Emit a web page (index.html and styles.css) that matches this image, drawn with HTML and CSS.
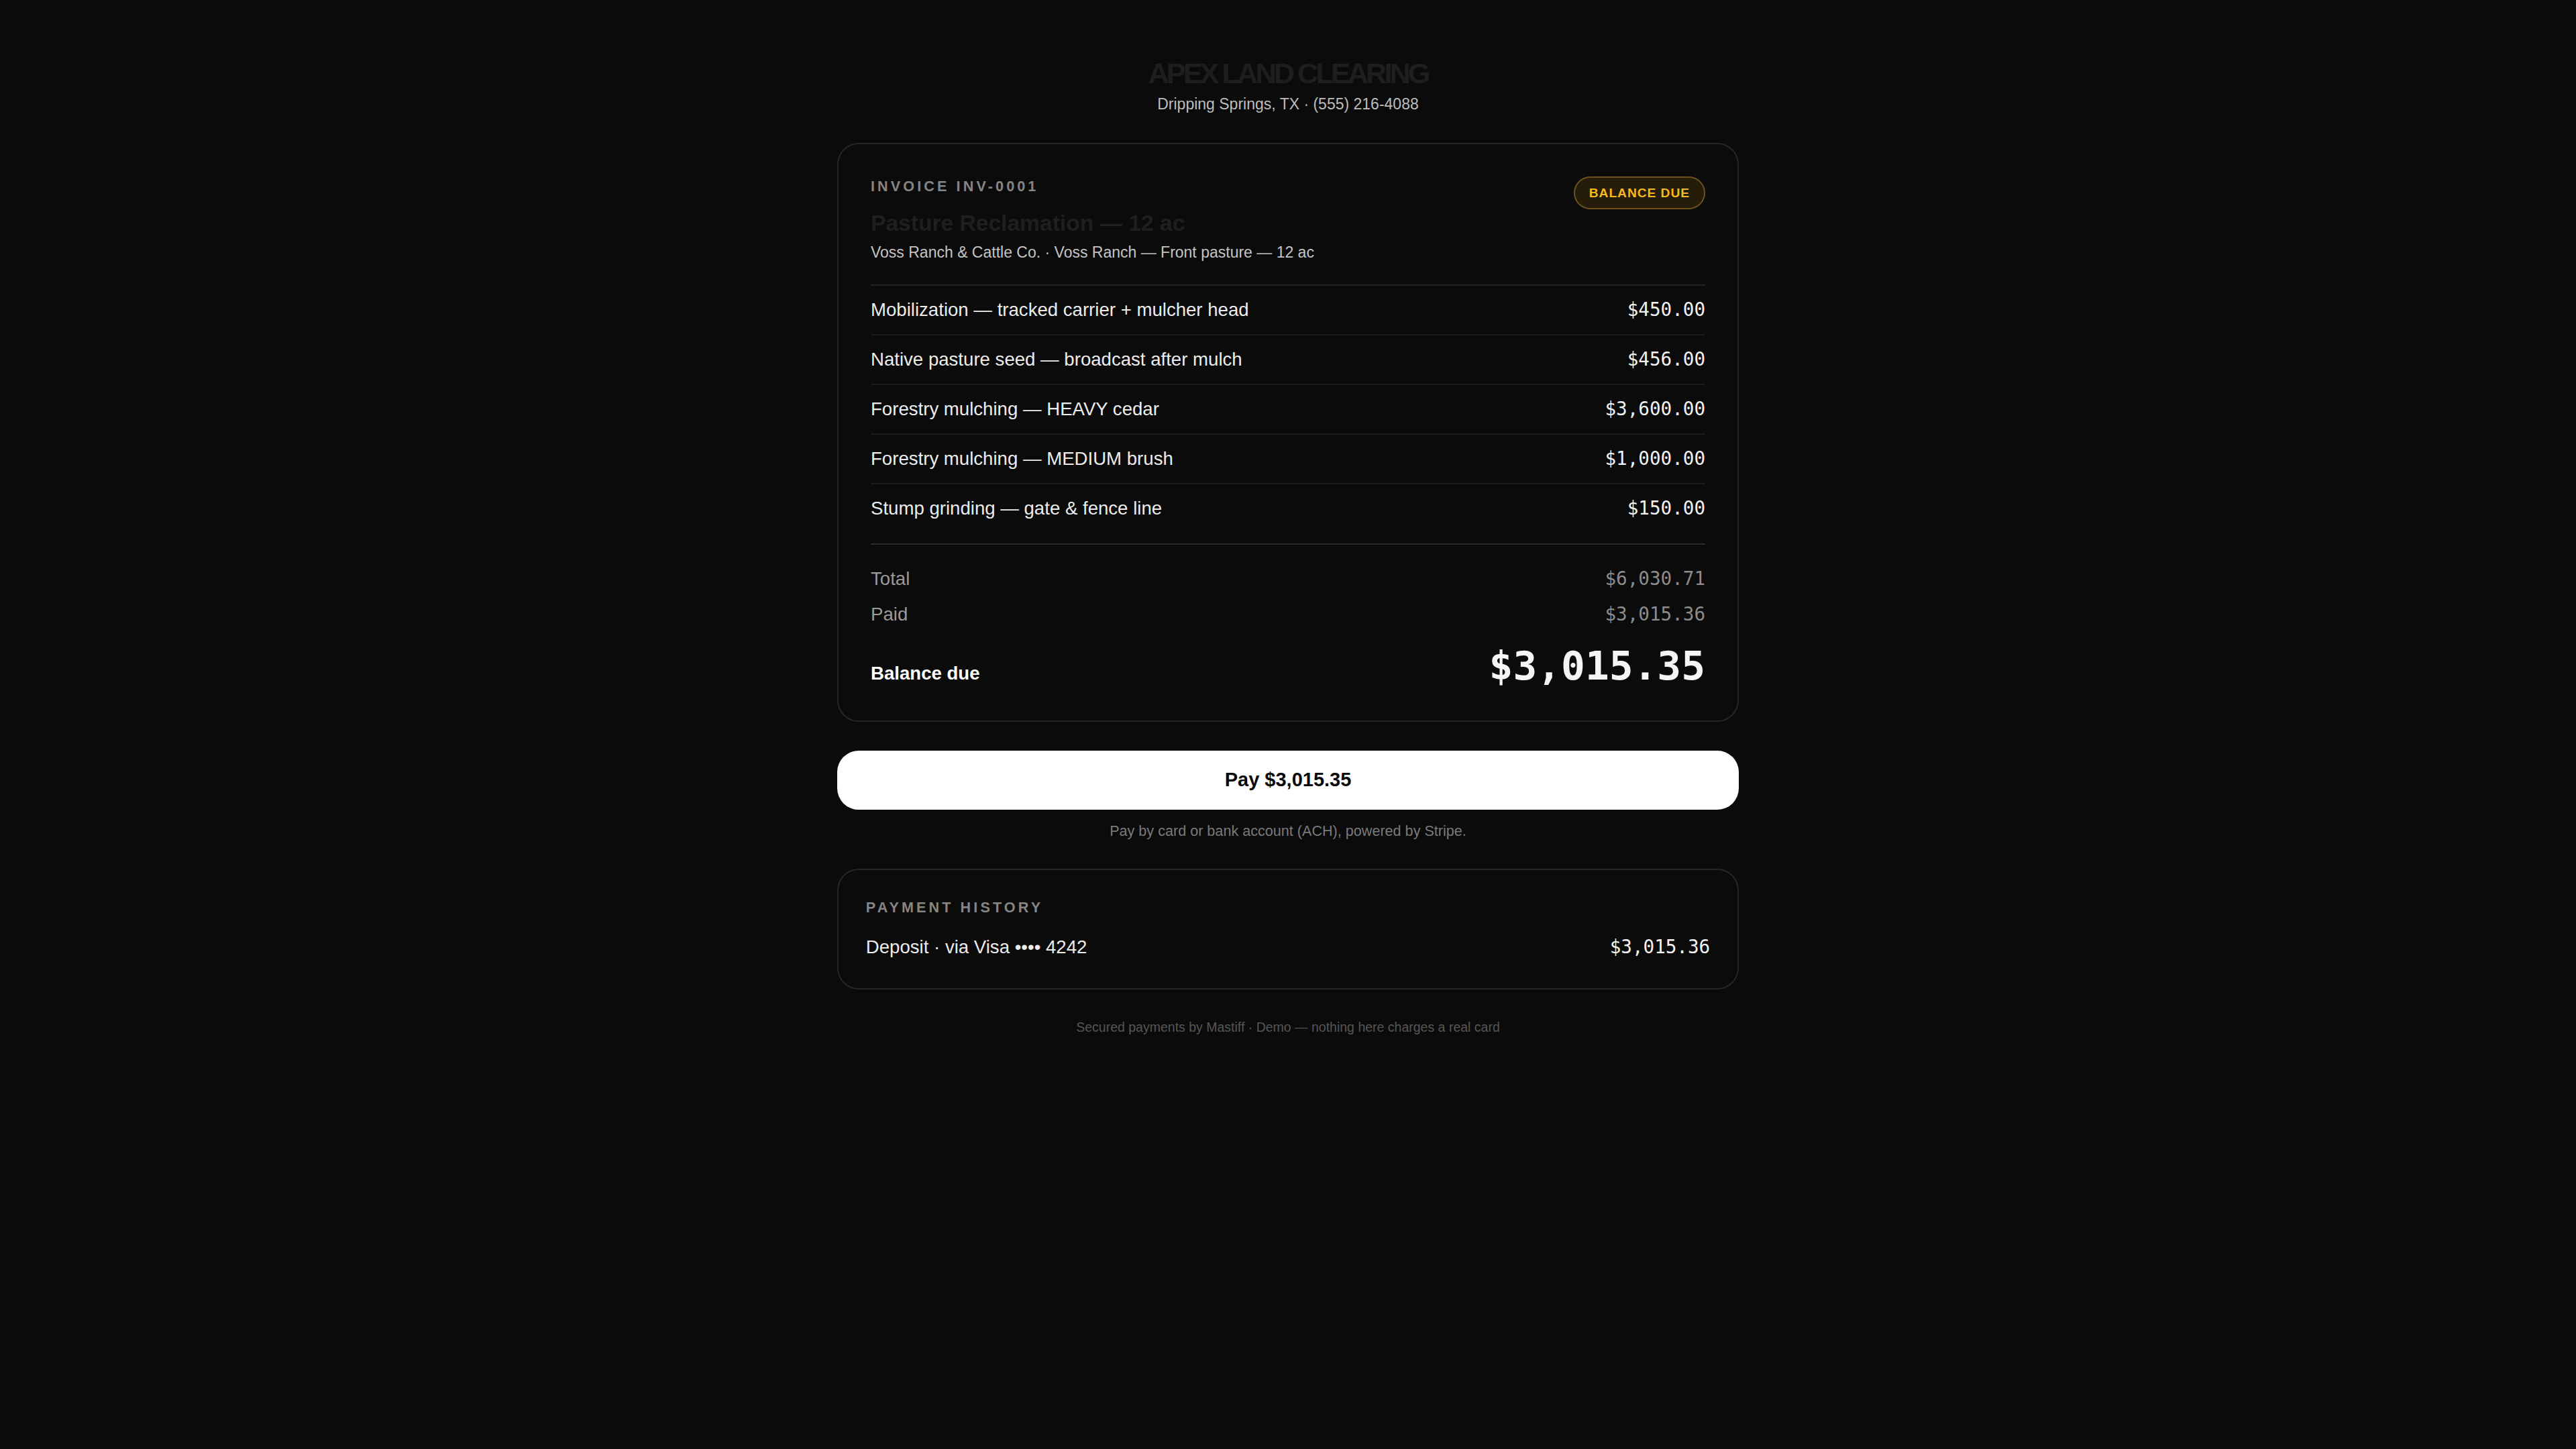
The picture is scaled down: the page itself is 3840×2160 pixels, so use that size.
FILE: index.html
```html
<!DOCTYPE html>
<html lang="en">
<head>
<meta charset="utf-8">
<title>Invoice INV-0001 · Apex Land Clearing</title>
<link rel="stylesheet" href="styles.css">
</head>
<body>
<main class="page">
  <header class="brand">
    <h1 class="brand-name">APEX LAND CLEARING</h1>
    <p class="brand-meta">Dripping Springs, TX · (555) 216-4088</p>
  </header>

  <section class="card invoice">
    <div class="invoice-head">
      <div class="invoice-info">
        <div class="eyebrow">INVOICE INV-0001</div>
        <h2 class="job-title">Pasture Reclamation — 12 ac</h2>
        <p class="job-meta">Voss Ranch &amp; Cattle Co. · Voss Ranch — Front pasture — 12 ac</p>
      </div>
      <span class="badge">BALANCE DUE</span>
    </div>

    <ul class="items">
      <li class="item"><span class="item-name">Mobilization — tracked carrier + mulcher head</span><span class="money">$450.00</span></li>
      <li class="item"><span class="item-name">Native pasture seed — broadcast after mulch</span><span class="money">$456.00</span></li>
      <li class="item"><span class="item-name">Forestry mulching — HEAVY cedar</span><span class="money">$3,600.00</span></li>
      <li class="item"><span class="item-name">Forestry mulching — MEDIUM brush</span><span class="money">$1,000.00</span></li>
      <li class="item"><span class="item-name">Stump grinding — gate &amp; fence line</span><span class="money">$150.00</span></li>
    </ul>

    <div class="totals">
      <div class="total-row"><span>Total</span><span class="money muted">$6,030.71</span></div>
      <div class="total-row"><span>Paid</span><span class="money muted">$3,015.36</span></div>
      <div class="balance-row"><span class="balance-label">Balance due</span><span class="balance-amount">$3,015.35</span></div>
    </div>
  </section>

  <button class="pay-btn" type="button">Pay $3,015.35</button>
  <p class="pay-note">Pay by card or bank account (ACH), powered by Stripe.</p>

  <section class="card history">
    <div class="eyebrow">PAYMENT HISTORY</div>
    <div class="history-row"><span>Deposit · via Visa •••• 4242</span><span class="money">$3,015.36</span></div>
  </section>

  <footer class="foot">Secured payments by Mastiff · Demo — nothing here charges a real card</footer>
</main>
</body>
</html>
```

FILE: styles.css
```css
* { box-sizing: border-box; }

html, body {
  background: #0b0b0b;
}

body {
  margin: 0;
  color: #e8e8e8;
  font-family: "Liberation Sans", Arial, sans-serif;
}

.page {
  width: 1344px;
  margin: 0 auto;
  padding-top: 84px;
  padding-bottom: 80px;
  display: flex;
  flex-direction: column;
}

.brand {
  text-align: center;
}

.brand-name {
  margin: 0;
  font-size: 43.2px;
  line-height: 51.84px;
  font-weight: 700;
  letter-spacing: -0.09em;
  color: #1e1e1e;
}

.brand-meta {
  margin: 3px 0 0;
  font-size: 23px;
  line-height: 32.2px;
  color: #bdbdbd;
}

.card {
  border: 2px solid #262626;
  border-radius: 32px;
  background: #0b0b0b;
}

.invoice {
  margin-top: 42px;
  padding: 48px;
}

.invoice-head {
  display: flex;
  justify-content: space-between;
  align-items: flex-start;
  padding-bottom: 32px;
  border-bottom: 2px solid #232323;
}

.eyebrow {
  font-size: 21.6px;
  line-height: 30px;
  font-weight: 700;
  letter-spacing: 0.19em;
  color: #858585;
}

.job-title {
  margin: 19px 0 0;
  font-size: 33.6px;
  line-height: 42px;
  font-weight: 700;
  color: #1f1f1f;
}

.job-meta {
  margin: 6px 0 0;
  font-size: 23px;
  line-height: 32.2px;
  color: #c4c4c4;
}

.badge {
  display: inline-block;
  padding: 11px 21px;
  font-size: 19.2px;
  line-height: 23px;
  font-weight: 700;
  letter-spacing: 0.05em;
  color: #f7b819;
  background: #251c09;
  border: 2px solid #6e521a;
  border-radius: 999px;
}

.items {
  list-style: none;
  margin: 0;
  padding: 0;
}

.item {
  display: flex;
  justify-content: space-between;
  align-items: center;
  padding: 17px 0;
  font-size: 27.6px;
  line-height: 38px;
  color: #ececec;
  border-bottom: 2px solid #1a1a1a;
}

.item:last-child {
  border-bottom: none;
}

.money {
  font-family: "DejaVu Sans Mono", "Liberation Mono", monospace;
  font-size: 27.6px;
  color: #f2f2f2;
}

.money.muted {
  color: #8c8c8c;
}

.totals {
  margin-top: 16px;
  padding-top: 25px;
  border-top: 2px solid #2a2a2a;
}

.total-row {
  display: flex;
  justify-content: space-between;
  align-items: center;
  padding: 7px 0;
  font-size: 27.6px;
  line-height: 38.64px;
  color: #9a9a9a;
}

.balance-row {
  display: flex;
  justify-content: space-between;
  align-items: baseline;
  margin-top: 17px;
}

.balance-label {
  font-size: 27.6px;
  font-weight: 700;
  color: #ffffff;
}

.balance-amount {
  font-family: "DejaVu Sans Mono", "Liberation Mono", monospace;
  font-size: 59.5px;
  line-height: 66px;
  font-weight: 700;
  color: #f5f5f5;
}

.pay-btn {
  margin-top: 43px;
  height: 88px;
  width: 100%;
  border: none;
  border-radius: 32px;
  background: #ffffff;
  color: #0a0a0a;
  font-family: "Liberation Sans", Arial, sans-serif;
  font-size: 29px;
  font-weight: 700;
  cursor: pointer;
}

.pay-note {
  margin: 17px 0 0;
  text-align: center;
  font-size: 21.6px;
  line-height: 30.24px;
  color: #7a7a7a;
}

.history {
  margin-top: 41px;
  padding: 40.8px;
}

.history-row {
  display: flex;
  justify-content: space-between;
  align-items: center;
  margin-top: 25.6px;
  font-size: 27.6px;
  line-height: 38.64px;
  color: #ececec;
}

.foot {
  margin-top: 43px;
  text-align: center;
  font-size: 19.5px;
  line-height: 26.9px;
  color: #565656;
}
```
